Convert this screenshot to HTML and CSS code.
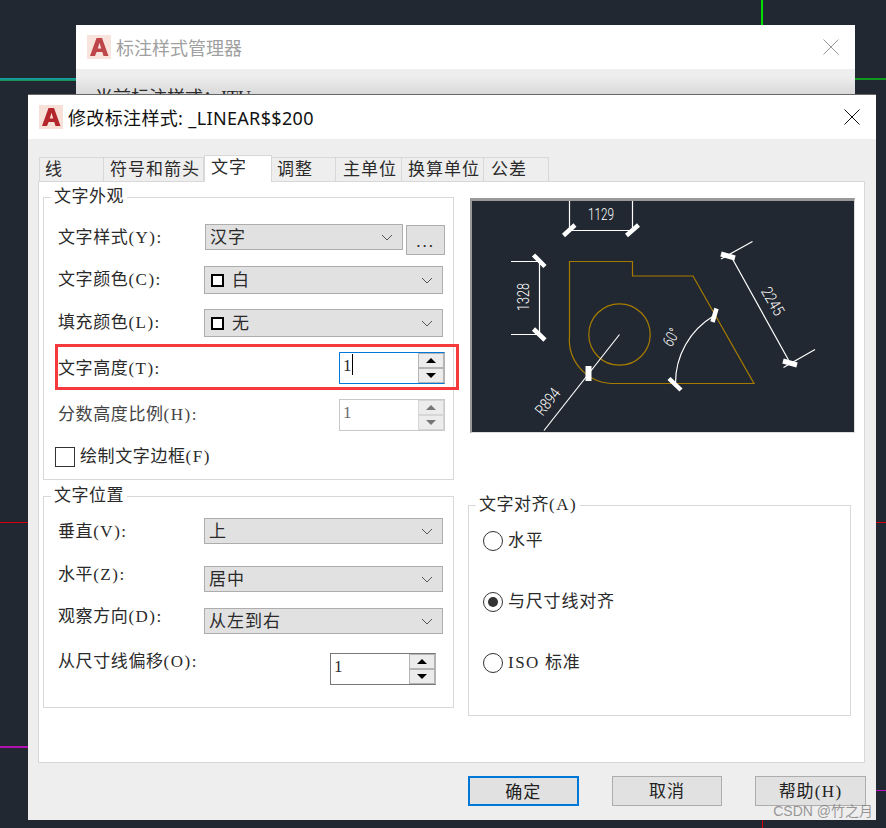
FILE: index.html
```html
<!DOCTYPE html>
<html lang="zh-CN">
<head>
<meta charset="UTF-8" />
<title>修改标注样式</title>
<link rel="stylesheet" href="styles.css">
</head>
<body>

<svg width="0" height="0" class="defs">
  <symbol id="acadLogo" viewBox="0 0 24 24">
    <rect width="24" height="24" fill="#f7e0d8" />
    <path d="M3 21 L9.5 3 L15 3 L21.5 21 L16.5 21 L15.3 17 L9.6 17 L8 21 Z M10.8 13.4 L14.2 13.4 L12.5 7.8 Z" fill="#b3262c" fill-rule="evenodd" />
  </symbol>
  <symbol id="chevron" viewBox="0 0 12 7">
    <path d="M1 1 L6 6 L11 1" fill="none" stroke="#555" stroke-width="1" />
  </symbol>
</svg>

<div class="desktop">
  <!-- drawing lines behind the dialogs -->
  <div class="cad-line cad-cyan"></div>
  <div class="cad-line cad-green-v"></div>
  <div class="cad-line cad-green-h"></div>
  <div class="cad-line cad-red-l"></div>
  <div class="cad-line cad-red-r"></div>
  <div class="cad-line cad-magenta-l"></div>
  <div class="cad-line cad-magenta-r"></div>
  <div class="cad-line cad-red-b"></div>

  <!-- manager dialog, mostly covered -->
  <div class="window window-back">
    <div class="titlebar">
      <svg class="logo"><use href="#acadLogo" /></svg>
      <span class="title">标注样式管理器</span>
      <span class="close">
        <svg width="16" height="16" viewBox="0 0 16 16"><path d="M0.5 0.5 L15.5 15.5 M15.5 0.5 L0.5 15.5" stroke="#9a9a9a" fill="none" /></svg>
      </span>
    </div>
    <div class="back-body">当前标注样式：ITU</div>
  </div>

  <!-- modify dialog -->
  <div class="window window-front">
    <div class="titlebar">
      <svg class="logo"><use href="#acadLogo" /></svg>
      <span class="title">修改标注样式: _LINEAR$$200</span>
      <span class="close">
        <svg width="16" height="16" viewBox="0 0 16 16"><path d="M0.5 0.5 L15.5 15.5 M15.5 0.5 L0.5 15.5" stroke="#111" fill="none" /></svg>
      </span>
    </div>

    <div class="dialog-body">
      <div class="tabs">
        <div class="tab tab-line">线</div>
        <div class="tab tab-arrow">符号和箭头</div>
        <div class="tab tab-text active">文字</div>
        <div class="tab tab-fit">调整</div>
        <div class="tab tab-main">主单位</div>
        <div class="tab tab-alt">换算单位</div>
        <div class="tab tab-tol">公差</div>
      </div>

      <div class="panel">
        <div class="col-left">
          <div class="group group-look">
            <span class="legend">文字外观</span>
            <div class="row">
              <label>文字样式<span class="key">(Y):</span></label>
              <div class="combo combo-short"><span class="combo-text">汉字</span><svg class="chev"><use href="#chevron" /></svg></div>
              <button class="more">...</button>
            </div>
            <div class="row">
              <label>文字颜色<span class="key">(C):</span></label>
              <div class="combo combo-tall"><i class="swatch"></i><span class="combo-text">白</span><svg class="chev"><use href="#chevron" /></svg></div>
            </div>
            <div class="row">
              <label>填充颜色<span class="key">(L):</span></label>
              <div class="combo combo-tall"><i class="swatch"></i><span class="combo-text">无</span><svg class="chev"><use href="#chevron" /></svg></div>
            </div>
            <div class="row row-high">
              <label>文字高度<span class="key">(T):</span></label>
              <div class="spin spin-focus">
                <div class="spin-input">1<i class="caret"></i></div>
                <div class="spin-btns"><span class="up"></span><span class="down"></span></div>
              </div>
            </div>
            <div class="row row-disabled">
              <label>分数高度比例<span class="key">(H):</span></label>
              <div class="spin">
                <div class="spin-input">1</div>
                <div class="spin-btns"><span class="up"></span><span class="down"></span></div>
              </div>
            </div>
            <div class="row row-check">
              <i class="checkbox"></i>
              <label>绘制文字边框<span class="key">(F)</span></label>
            </div>
            <!-- red marker drawn over the screenshot -->
            <div class="marker"></div>
          </div>

          <div class="group group-place">
            <span class="legend">文字位置</span>
            <div class="row">
              <label>垂直<span class="key">(V):</span></label>
              <div class="combo"><span class="combo-text">上</span><svg class="chev"><use href="#chevron" /></svg></div>
            </div>
            <div class="row">
              <label class="label-high">水平<span class="key">(Z):</span></label>
              <div class="combo"><span class="combo-text">居中</span><svg class="chev"><use href="#chevron" /></svg></div>
            </div>
            <div class="row">
              <label class="label-high">观察方向<span class="key">(D):</span></label>
              <div class="combo"><span class="combo-text">从左到右</span><svg class="chev"><use href="#chevron" /></svg></div>
            </div>
            <div class="row row-offset">
              <label class="label-high">从尺寸线偏移<span class="key">(O):</span></label>
              <div class="spin spin-dark">
                <div class="spin-input">1</div>
                <div class="spin-btns"><span class="up"></span><span class="down"></span></div>
              </div>
            </div>
          </div>
        </div>

        <div class="col-right">
          <div class="preview">
            <svg width="385" height="235" viewBox="470 198 385 235">
              <g stroke="#a67c00" stroke-width="1.2" fill="none">
                <path d="M569.5 261.5 H632.5 V276 H693 L754 383.5 H611.5 A44 44 0 0 1 569.5 336 Z" />
                <circle cx="619.5" cy="334.5" r="30.7" />
              </g>
              <g stroke="#fff" stroke-width="1.2" fill="none">
                <path d="M569.5 201 V230.5 H632.5 V201" />
                <path d="M511 261.5 H539.5 V334.5 H511" />
                <path d="M619.5 334.5 L544 430.5" />
                <path d="M713.5 316 A78 78 0 0 0 675.5 383.5" />
                <path d="M732 258 L788.5 360 M721 259 L752.5 241.5 M783.5 367.5 L815 349.5" />
              </g>
              <g stroke="#fff" stroke-width="4.5" fill="none">
                <path d="M563.5 235.5 L575 225 M626.5 235.5 L638.5 225" />
                <path d="M533.5 255 L545 266.5 M533.5 329 L545 340" />
                <path d="M588.5 366 V381" stroke-width="6" />
                <path d="M669 378.5 L681 390 M716.5 308.5 L712.5 322" />
                <path d="M721 254 L735 258 M783 361 L797 365" stroke-width="5" />
              </g>
              <g class="dim-text">
                <text x="601" y="220" text-anchor="middle" textLength="26" lengthAdjust="spacingAndGlyphs">1129</text>
                <text transform="translate(529 297) rotate(-90)" text-anchor="middle" textLength="28" lengthAdjust="spacingAndGlyphs">1328</text>
                <text transform="translate(552 405) rotate(-52)" text-anchor="middle" textLength="30" lengthAdjust="spacingAndGlyphs">R894</text>
                <text transform="translate(676 340) rotate(-60)" text-anchor="middle" textLength="18" lengthAdjust="spacingAndGlyphs">60°</text>
                <text transform="translate(768 304) rotate(60)" text-anchor="middle" textLength="30" lengthAdjust="spacingAndGlyphs">2245</text>
              </g>
            </svg>
          </div>

          <div class="group group-align">
            <span class="legend">文字对齐<span class="key">(A)</span></span>
            <div class="radio-row"><i class="radio"></i><label>水平</label></div>
            <div class="radio-row"><i class="radio checked"></i><label>与尺寸线对齐</label></div>
            <div class="radio-row"><i class="radio"></i><label><span class="key">ISO</span> 标准</label></div>
          </div>
        </div>
      </div>

      <div class="buttons">
        <button class="btn btn-default">确定</button>
        <button class="btn">取消</button>
        <button class="btn">帮助<span class="key">(H)</span></button>
      </div>
    </div>
  </div>

  <div class="watermark">CSDN @竹之月</div>
</div>

</body>
</html>
```

FILE: styles.css
```css
* {
  box-sizing: border-box;
}
body {
  margin: 0;
  background: #222831;
  font-family: "Liberation Serif", "Noto Sans CJK SC", serif;
  font-size: 17px;
  color: #2a2a2a;
}
.defs {
  position: absolute;
}
.desktop {
  position: relative;
  width: 886px;
  height: 828px;
  overflow: hidden;
  background: #222831;
}
.key {
  letter-spacing: 1.5px;
}

/* CAD lines */
.cad-line {
  position: absolute;
}
.cad-cyan {
  left: 0; top: 78px;
  width: 76px; height: 3px;
  background: linear-gradient(#0fa3b5, #1c8f4a);
}
.cad-green-v {
  left: 761px; top: 0;
  width: 2px; height: 25px;
  background: #00e000;
}
.cad-green-h {
  left: 855px; top: 78px;
  width: 31px; height: 2px;
  background: #0f9a1e;
}
.cad-red-l {
  left: 0; top: 522px;
  width: 28px; height: 1px;
  background: #d4000c;
}
.cad-red-r {
  left: 876px; top: 522px;
  width: 10px; height: 1px;
  background: #d4000c;
}
.cad-magenta-l {
  left: 0; top: 746px;
  width: 28px; height: 2px;
  background: #b010b0;
}
.cad-magenta-r {
  left: 876px; top: 790px;
  width: 10px; height: 1px;
  background: #c010c0;
}
.cad-red-b {
  left: 762px; top: 820px;
  width: 1px; height: 8px;
  background: #d4000c;
}

/* Windows */
.window {
  position: absolute;
  background: #eee;
  overflow: hidden;
}
.window-back {
  left: 76px; top: 25px;
  width: 779px; height: 70px;
}
.window-front {
  left: 28px; top: 95px;
  width: 848px; height: 725px;
  box-shadow: 0 -1px 0 #666;
}
.titlebar {
  height: 44px;
  background: #fff;
  display: flex;
  align-items: center;
  padding: 0 16px 0 11px;
  font-family: "Noto Sans", "Noto Sans CJK SC", sans-serif;
  font-size: 18px;
  letter-spacing: .35px;
  color: #111;
}
.logo {
  width: 24px;
  height: 24px;
  flex: none;
}
.title {
  margin-left: 5px;
  white-space: nowrap;
}
.close {
  margin-left: auto;
  display: flex;
}
.window-back .titlebar {
  color: #a0a0a0;
  letter-spacing: 0;
  padding-right: 16px;
}
.window-back .logo {
  opacity: .85;
}
.back-body {
  height: 26px;
  padding: 17px 0 0 19px;
  line-height: 24px;
  font-size: 18px;
  white-space: nowrap;
  background: linear-gradient(#eee 25%, #d8d8d8 100%);
}

/* Tabs and panel */
.dialog-body {
  padding: 18px 10px 0 10px;
}
.tabs {
  display: flex;
  height: 24px;
  padding-left: 1px;
  align-items: flex-end;
  font-size: 17px;
}
.tab {
  height: 24px;
  line-height: 23px;
  padding-left: 6px;
  letter-spacing: 1px;
  background: #eee;
  border: 1px solid #d8d8d8;
  border-bottom: none;
  border-left: none;
  white-space: nowrap;
}
.tab-line { width: 65px; padding-left: 5px; border-left: 1px solid #d8d8d8; }
.tab-arrow { width: 100px; }
.tab-text { width: 68px; }
.tab-fit { width: 64px; padding-left: 5px; }
.tab-main { width: 66px; padding-left: 7px; }
.tab-alt { width: 82px; padding-left: 6px; }
.tab-tol { width: 65px; padding-left: 7px; }
.tab.active {
  position: relative;
  height: 27px;
  margin-bottom: -1px;
  background: #fff;
  border-left: 1px solid #d8d8d8;
  z-index: 1;
}
.panel {
  width: 827px;
  height: 582px;
  background: #fff;
  border: 1px solid #d8d8d8;
  display: flex;
  padding: 15px 0 0 4px;
}
.col-left {
  width: 425px;
  flex: none;
}
.col-right {
  width: 385px;
  flex: none;
}

/* Groups */
.group {
  position: relative;
  border: 1px solid #d8d8d8;
}
.legend {
  position: absolute;
  top: -12px;
  left: 7px;
  padding: 0 3px;
  background: #fff;
  line-height: 22px;
  letter-spacing: .5px;
  white-space: nowrap;
}
.group-look {
  width: 411px;
  height: 283px;
  padding-top: 26px;
  display: grid;
  grid-template-rows: 42px 43px 43px 47px 48px 20px;
}
.group-place {
  width: 411px;
  height: 212px;
  margin-top: 16px;
  padding-top: 21px;
  display: grid;
  grid-template-rows: 48px 42px 45px 32px;
}
.group-align {
  width: 383px;
  height: 211px;
  margin-top: 72px;
  padding: 20px 0 0 14px;
}
.row {
  display: flex;
  align-items: flex-start;
  padding-left: 14px;
}
.row label {
  width: 146px;
  line-height: 28px;
  white-space: nowrap;
  letter-spacing: .6px;
  flex: none;
}
.row .key {
  letter-spacing: 1.5px;
}
.row .label-high {
  margin-top: -5px;
}
.row-high label {
  width: 281px;
  line-height: 34px;
}
.row-disabled label {
  width: 281px;
  line-height: 32px;
  color: #444;
}
.group-place .row-offset label {
  width: 272px;
}
.row-check {
  align-items: center;
  padding-left: 11px;
}
.row-check label {
  width: auto;
  margin-left: 5px;
}
.checkbox {
  width: 20px;
  height: 20px;
  background: #fff;
  border: 1px solid #333;
  flex: none;
}

/* Combo boxes */
.combo {
  width: 239px;
  height: 26px;
  background: #e1e1e1;
  border: 1px solid #adadad;
  display: flex;
  align-items: center;
  padding: 0 9px 3px 4px;
}
.combo-short {
  width: 198px;
  margin-left: 1px;
}
.combo-tall {
  height: 28px;
  padding-left: 6px;
}
.combo-text {
  letter-spacing: 1px;
  white-space: nowrap;
}
.chev {
  width: 12px;
  height: 7px;
  margin: 3px 0 0 auto;
  flex: none;
}
.swatch {
  width: 13px;
  height: 13px;
  margin: 3px 8px 0 0;
  border: 2px solid #000;
  background: #fff;
  flex: none;
}
.more {
  width: 39px;
  height: 30px;
  margin: 1px 0 0 3px;
  padding: 4px 0 0;
  background: #e1e1e1;
  border: 1px solid #adadad;
  font: inherit;
  letter-spacing: 2px;
  color: #222;
}

/* Spinners */
.spin {
  width: 106px;
  height: 32px;
  display: flex;
  border: 1px solid #c8c8c8;
  background: #fff;
}
.spin-input {
  width: 78px;
  padding-left: 3px;
  line-height: 26px;
  font-size: 17px;
  flex: none;
}
.caret {
  display: inline-block;
  width: 1px;
  height: 21px;
  background: #000;
  vertical-align: -4px;
}
.spin-btns {
  flex: 1;
  display: flex;
  flex-direction: column;
  gap: 2px;
  padding: 1px;
  background: #b4b4b4;
}
.spin-btns span {
  flex: 1;
  background: #ececec;
  display: flex;
  align-items: center;
  justify-content: center;
}
.spin-btns span::after {
  content: "";
  border-left: 5px solid transparent;
  border-right: 5px solid transparent;
}
.spin-btns .up::after {
  border-bottom: 5px solid #000;
}
.spin-btns .down::after {
  border-top: 5px solid #000;
}
.spin-focus {
  border-color: #0078d7 #b4b4b4 #0078d7 #0078d7;
}
.spin-dark {
  border-color: #777 #b4b4b4 #777 #777;
}
.row-disabled .spin-input {
  color: #6d6d6d;
}
.row-disabled .spin-btns {
  background: #d6d6d6;
}
.row-disabled .spin-btns .up::after {
  border-bottom-color: #777;
}
.row-disabled .spin-btns .down::after {
  border-top-color: #777;
}
.marker {
  position: absolute;
  left: 11px;
  top: 146px;
  width: 404px;
  height: 46px;
  border: 3px solid #f5393c;
  pointer-events: none;
}

/* Radios */
.radio-row {
  height: 61px;
  display: flex;
  align-items: flex-start;
}
.radio-row label {
  margin-left: 5px;
  line-height: 30px;
  letter-spacing: .8px;
  white-space: nowrap;
}
.radio {
  width: 20px;
  height: 20px;
  margin-top: 5px;
  border: 1px solid #333;
  border-radius: 50%;
  background: #fff;
  display: flex;
  align-items: center;
  justify-content: center;
  flex: none;
}
.radio.checked::after {
  content: "";
  width: 10px;
  height: 10px;
  border-radius: 50%;
  background: #333;
}

/* Preview */
.preview {
  width: 385px;
  height: 235px;
  margin-left: 2px;
  margin-top: 1px;
  background: #222831;
  border-top: 3px solid #999;
  border-left: 2px solid #999;
  border-right: 1px solid #ddd;
  border-bottom: 1px solid #ddd;
  overflow: hidden;
}
.preview svg {
  display: block;
  margin: -3px 0 0 -2px;
}
.dim-text {
  fill: #fff;
  font-family: Roboto, "Liberation Sans", sans-serif;
  font-weight: 300;
  font-size: 16px;
}

/* Bottom buttons */
.buttons {
  display: flex;
  gap: 33px;
  padding: 13px 0 0 430px;
}
.btn {
  width: 111px;
  height: 30px;
  padding: 0 0 3px;
  background: #e1e1e1;
  border: 1px solid #adadad;
  font: inherit;
  letter-spacing: 1px;
  color: #222;
}
.btn-default {
  border: 2px solid #0078d7;
}

.watermark {
  position: absolute;
  right: 13px;
  bottom: 8px;
  font-family: "Liberation Sans", "Noto Sans CJK SC", sans-serif;
  font-size: 14px;
  line-height: 17px;
  color: rgba(120, 120, 120, .75);
  white-space: nowrap;
}
```
